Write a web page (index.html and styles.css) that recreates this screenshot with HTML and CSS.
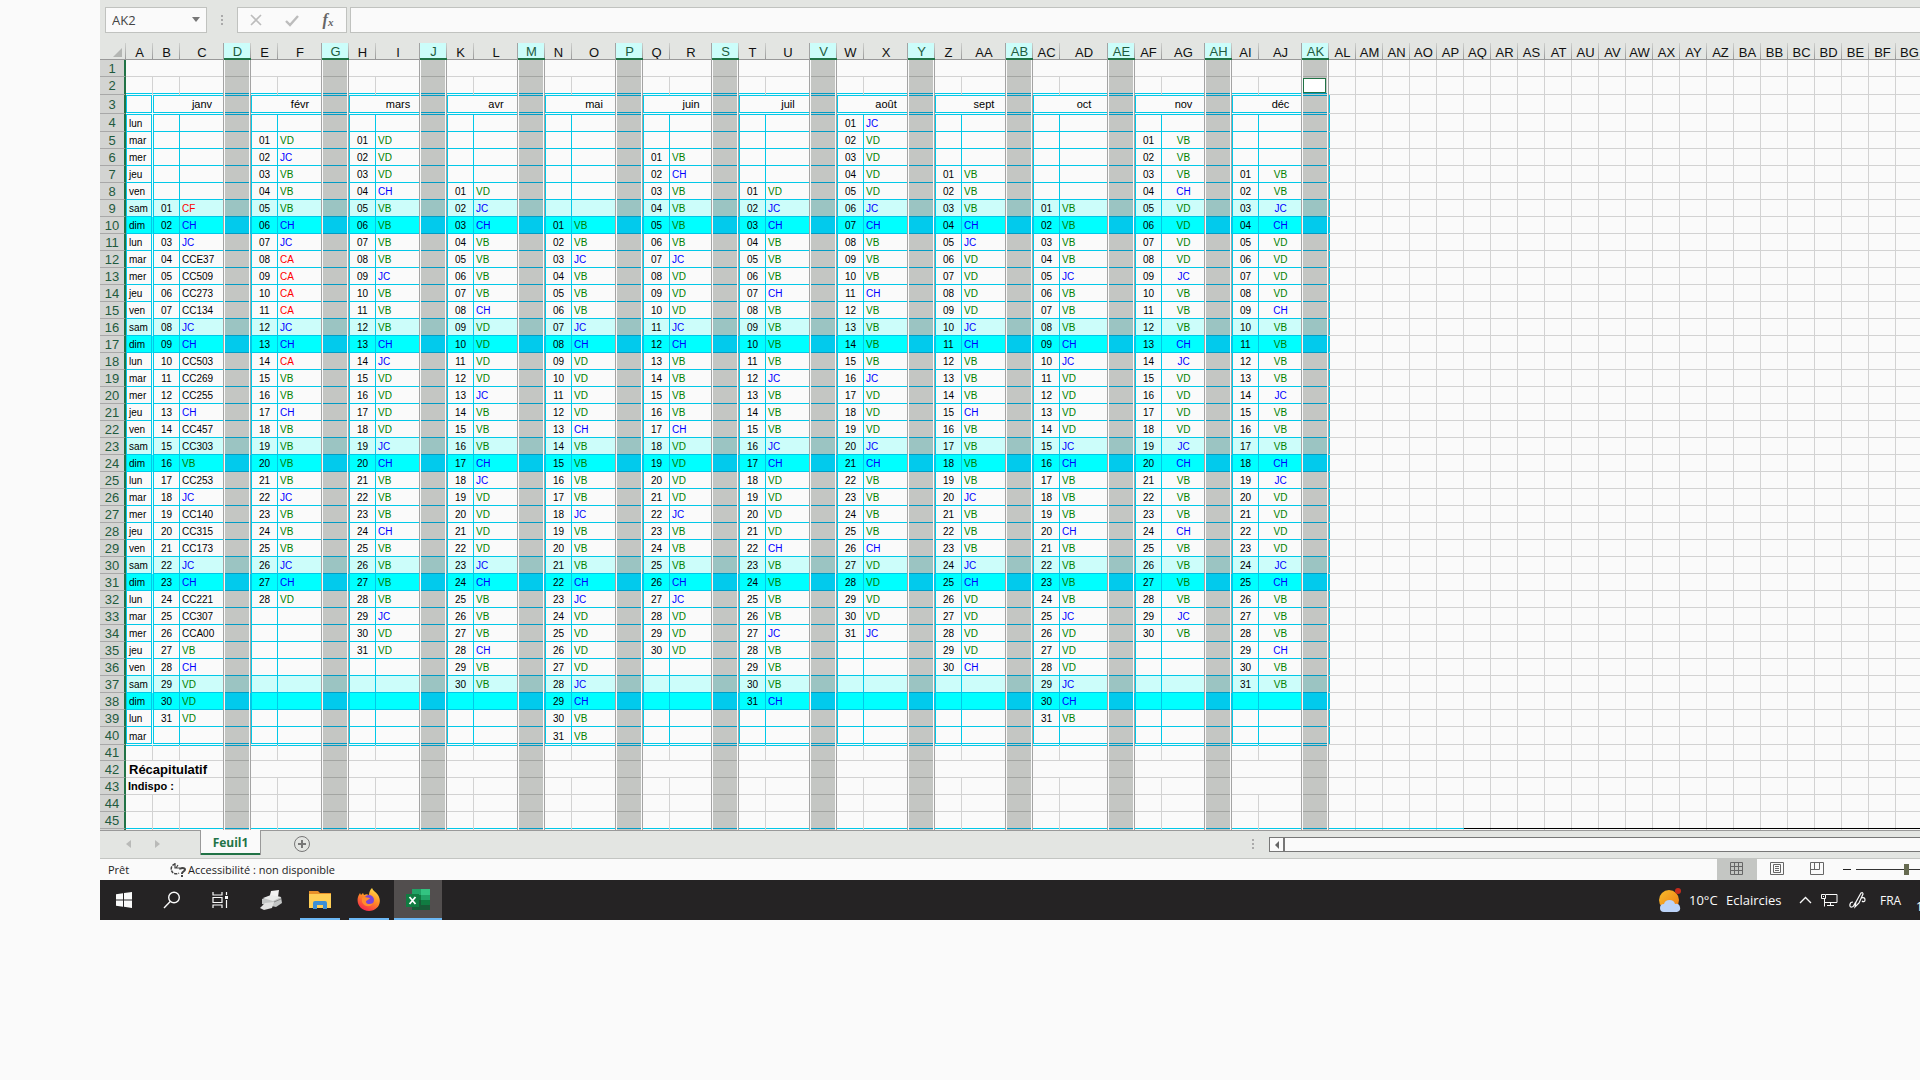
FILE: index.html
```html
<!DOCTYPE html>
<html lang="fr">
<head>
<meta charset="utf-8">
<title>Planning annuel</title>
<link rel="stylesheet" href="styles.css">
</head>
<body>
<div class="window">
  <header class="formula-bar">
    <div class="name-box">
      <input class="name-input" aria-label="Zone Nom" value="AK2">
      <button class="name-toggle" aria-label="Ouvrir la liste"><svg width="8" height="5" viewBox="0 0 8 5"><path d="M0 0h8L4 5z" fill="#777"/></svg></button>
    </div>
    <span class="grip"></span>
    <div class="formula-buttons">
      <button aria-label="Annuler"><svg width="14" height="14" viewBox="0 0 14 14"><path d="M2 2l10 10M12 2L2 12" stroke="#bcbcbc" stroke-width="1.600" fill="none"/></svg></button>
      <button aria-label="Entrer"><svg width="14" height="14" viewBox="0 0 14 14"><path d="M1 8l4 4 8-9" stroke="#bcbcbc" stroke-width="2.400" fill="none"/></svg></button>
      <button class="fx" aria-label="Insérer une fonction">f<small>x</small></button>
    </div>
    <input class="formula-input" aria-label="Barre de formule">
  </header>

  <main class="sheet">
    <table class="grid" id="grid"></table>
  </main>

  <nav class="tab-bar">
    <button class="nav-arrow" aria-label="Feuille précédente"><svg width="5" height="8" viewBox="0 0 5 8"><path d="M5 0v8L0 4z" fill="#b9bab8"/></svg></button>
    <button class="nav-arrow" aria-label="Feuille suivante"><svg width="5" height="8" viewBox="0 0 5 8"><path d="M0 0v8l5-4z" fill="#b9bab8"/></svg></button>
    <button class="sheet-tab">Feuil1</button>
    <button class="add-sheet" aria-label="Nouvelle feuille"><svg width="18" height="18" viewBox="0 0 18 18"><circle cx="9" cy="9" r="7.5" fill="none" stroke="#777"/><path d="M9 5v8M5 9h8" stroke="#777" stroke-width="2"/></svg></button>
    <span class="grip tab-grip"></span>
    <div class="scrollbar">
      <button class="scroll-left" aria-label="Défiler à gauche"><svg width="4" height="8" viewBox="0 0 4 8"><path d="M4 0v8L0 4z" fill="#666"/></svg></button>
    </div>
  </nav>

  <footer class="status-bar">
    <span class="ready">Prêt</span>
    <svg class="access-icon" width="18" height="16" viewBox="0 0 18 16" fill="none" stroke="#444"><path d="M6 2a5 5 0 1 0 4 9" stroke-width="1.5" stroke-dasharray="3 1"/><path d="M6 1v5h5M9 3l-2 3" stroke-width="1.2"/><path d="M11 7.500c0-2 5-2 5 0s-3 2-3 4v.5M13 13v2" stroke-width="2"/></svg>
    <span class="access">Accessibilité : non disponible</span>
    <div class="views">
      <button class="view active" aria-label="Normal"><svg width="14" height="14" viewBox="0 0 14 14"><path d="M.5 .5h12v12H.5zM4.500 .5v12M8.500 .5v12M.5 4.500h12M.5 8.500h12" fill="none" stroke="#666"/></svg></button>
      <button class="view" aria-label="Mise en page"><svg width="14" height="14" viewBox="0 0 14 14"><path d="M.5 .5h13v12H.5zM3.500 2.500h7v8h-7zM5 4.500h4M5 6.500h4M5 8.500h4" fill="none" stroke="#666"/></svg></button>
      <button class="view" aria-label="Sauts de page"><svg width="14" height="14" viewBox="0 0 14 14"><path d="M.5 .5h13v12H.5zM.5 7.500h9v-7M4.500 .5v7" fill="none" stroke="#666"/></svg></button>
      <span class="minus"></span>
      <span class="zoom-track"><span class="zoom-thumb"></span></span>
    </div>
  </footer>

  <div class="taskbar">
    <button class="task" aria-label="Démarrer"><svg width="16" height="16" viewBox="0 0 16 16" fill="#fafafa"><path d="M0 2.200l7-1V7.500H0zM8 1l8-1v7.500H8zM0 8.500h7v6.300l-7-1zM8 8.500h8V16l-8-1.200z"/></svg></button>
    <button class="task" aria-label="Rechercher"><svg width="18" height="18" viewBox="0 0 18 18" fill="none" stroke="#fafafa" stroke-width="1.400"><circle cx="11" cy="6.500" r="5.300"/><path d="M7.200 10.500L1 17"/></svg></button>
    <button class="task" aria-label="Vue des tâches"><svg width="17" height="16" viewBox="0 0 17 16" fill="none" stroke="#fafafa" stroke-width="1.200"><path d="M1 0v3h9V0M1 5.500h9v5H1zM1 16v-3h9v3M14.500 0v3M14.500 8v8"/><path d="M13 4h3v3h-3z" fill="#fafafa" stroke="none"/></svg></button>
    <button class="task" aria-label="Imprimante"><svg width="24" height="20" viewBox="0 0 24 20"><path d="M11 1l8-1-1 7-9 2z" fill="#f2f2f2"/><path d="M2 9l8-3 11 1 1 6-6 4-14-3z" fill="#c3c5c5"/><path d="M3 8l8-3 10 2-8 4z" fill="#e9eaea"/><path d="M5 13l9-1-2 6-8 2-4-2z" fill="#e2e2e2"/><path d="M14 12l7-3" stroke="#8a8a8a"/></svg></button>
    <button class="task open" aria-label="Explorateur de fichiers"><svg width="22" height="18" viewBox="0 0 22 18"><path d="M0 0h9l2 2h11v6H0z" fill="#e8912a"/><path d="M0 3h22v14H0z" fill="#ffcf56"/><path d="M4 18v-6q0-2 2-2h10q2 0 2 2v6h-4v-4H8v4z" fill="#3c8fd6"/></svg></button>
    <button class="task open" aria-label="Firefox"><svg width="24" height="24" viewBox="0 0 24 24"><defs><linearGradient id="ff" x1=".8" y1="0" x2=".3" y2="1"><stop offset="0" stop-color="#ffe14a"/><stop offset=".5" stop-color="#ff8a25"/><stop offset="1" stop-color="#f5264f"/></linearGradient></defs><path d="M15 0c1 3 4 4 6 7 5 8-1 16-9 16S-1 16 1 9c.500-2 1.500-3 2-4l1 2 2-2 1 2c2-1 3-1 5 0 0-3 1-5 3-7z" fill="url(#ff)"/><circle cx="12" cy="12" r="5" fill="#7a45d8"/><path d="M5 10c3-2 5 0 8 0-1 2-4 2-4 4s4 3 7 1c-2 5-9 4-11-1z" fill="#ff8c2e"/></svg></button>
    <button class="task open current" aria-label="Excel"><svg width="24" height="22" viewBox="0 0 24 22"><path d="M6 0h9v6H6z" fill="#21a366"/><path d="M15 0h9v6h-9z" fill="#33c481"/><path d="M6 6h9v5H6z" fill="#107c41"/><path d="M15 6h9v5h-9z" fill="#21a366"/><path d="M6 11h9v10H6z" fill="#185c37"/><path d="M15 11h9v5h-9z" fill="#107c41"/><path d="M15 16h9v5h-9z" fill="#185c37"/><path d="M0 5h13v13H0z" fill="#107c41"/><path d="M3.500 8l6 7M9.500 8l-6 7" stroke="#fff" stroke-width="1.800"/></svg></button>
    <div class="tray">
      <svg class="weather" width="24" height="25" viewBox="0 0 24 25"><defs><linearGradient id="sun" x1="0" y1="0" x2="1" y2="1"><stop offset="0" stop-color="#f7bd2c"/><stop offset="1" stop-color="#f07a12"/></linearGradient></defs><circle cx="11" cy="12" r="10" fill="url(#sun)"/><circle cx="20" cy="3" r="3" fill="#c42b1c"/><path d="M6 24a4 4 0 0 1 0-8q1-4 5.500-4t5.500 4a4 4 0 0 1 2 8z" fill="#bcd3f8"/></svg>
      <span class="temp">10°C</span>
      <span class="sky">Eclaircies</span>
      <svg class="chev" width="13" height="8" viewBox="0 0 13 8"><path d="M1 7l5.500-5.500L12 7" fill="none" stroke="#fafafa" stroke-width="1.300"/></svg>
      <svg class="screen" width="17" height="14" viewBox="0 0 17 14" fill="none" stroke="#fafafa"><path d="M5 1.500h11v8H3.500M3.500 6v7.500M.5 1.500h4v4h-4zM2 3.500h1M6 12.500h7M9.500 10v2"/></svg>
      <svg class="pen" width="17" height="17" viewBox="0 0 17 17" fill="none" stroke="#fafafa" stroke-width="1.200"><path d="M6 15l1-5 5-9q2-1 2 1l-4 9zM4 10c-4 0-4 6-1 5 2 0 2-3 4-5M12 6c3-1 4 0 4 2s-2 2-3 1"/></svg>
      <span class="lang">FRA</span>
      <span class="clock">1</span>
    </div>
  </div>
</div>
<script src="sheet.js"></script>
</body>
</html>
```
FILE: styles.css
```css
* { box-sizing: border-box; }

:root {
  --paper: #fafafa;
  --chrome: #e3e5e2;
  --line: #d2d2d2;
  --cyan: #02c8e8;
  --green: #217346;
  --ui: "Open Sans", "Noto Sans", sans-serif;
  --cell: "Liberation Sans", Arial, sans-serif;
}

body { margin: 0; background: var(--paper); font-family: var(--ui); overflow: hidden; }
button, input { font: inherit; color: inherit; margin: 0; padding: 0; border: 0; background: none; border-radius: 0; }
button { display: flex; align-items: center; justify-content: center; }
svg { display: block; flex: none; }

.window { margin-left: 100px; overflow: hidden; }

/* Formula bar */
.formula-bar { display: flex; align-items: stretch; background: var(--chrome); padding: 7px 0 10px 5px; height: 43px; }
.name-box, .formula-buttons, .formula-input { background: var(--paper); border: 1px solid #c0c2bf; }
.name-box { display: flex; width: 102px; }
.name-input { flex: 1; min-width: 0; padding-left: 6px; font-size: 13px; color: #444; }
.name-toggle { width: 20px; padding-bottom: 2px; }
.grip { width: 2px; height: 10px; margin: 8px 14px; background: repeating-linear-gradient(#aaa 0 2px, transparent 2px 4px); }
.formula-buttons { display: flex; width: 110px; justify-content: space-around; padding: 0; }
.formula-buttons button { width: 36px; }
.fx { font: italic bold 16px "Liberation Serif", serif; color: #666; }
.fx small { font-size: 11px; padding-top: 4px; }
.formula-input { flex: 1; min-width: 0; margin-left: 3px; border-right: 0; }

/* Grid: every rule is an inset shadow so that double borders stay on whole pixels */
.sheet { overflow: hidden; border-bottom: 1px solid #999; }
.grid { table-layout: fixed; width: 0; border-collapse: separate; border-spacing: 0; font: 10px/15px var(--cell); }
.grid th, .grid td { padding: 0; font-weight: normal; white-space: nowrap; vertical-align: middle; }
.w-head { width: 26px; }
.w-narrow { width: 27px; }
.w-42 { width: 42px; }
.w-43 { width: 43px; }
.w-44 { width: 44px; }
.w-48 { width: 48px; }

.h-1 { height: 1px; }
.h-16 { height: 16px; }
.h-17 { height: 17px; }
.h-18 { height: 18px; }
.h-19 { height: 19px; }

.grid thead th {
  font-size: 13px; line-height: 13px; color: #111; padding-top: 2px; border-bottom: 1px solid #999; overflow: hidden;
  background: linear-gradient(#cfd1ce, #9a9a9a) right / 1px 100% no-repeat var(--chrome);
}
.grid thead .picked { background-color: #ccfdfa; color: #1e5c40; border-bottom: 2px solid var(--green); box-shadow: -1px 0 #a3a3a3; }
.grid thead .corner { padding-right: 4px; }
.corner svg { margin-left: auto; }

.grid tbody th { font-size: 13px; color: #1f5a3e; background: #d3d4d2; border-right: 2px solid var(--green); border-bottom: 1px solid #a8a8a8; }

td {
  --h: var(--line); --v: var(--line);
  background-color: var(--fill, var(--paper));
  box-shadow:
    inset -1px 0 var(--v), inset 0 -1px var(--h),
    inset 0 1px var(--t, transparent), inset 1px 0 var(--l, transparent),
    inset 0 -2px var(--h2, transparent), inset -2px 0 var(--v2, transparent);
}
td.edge { --v: #a3a3a3; }
td.gap {
  --v: #a3a3a3; --h: #a3a5a2;
  background-color: var(--gap-fill, #c4c6c3);
  box-shadow:
    inset -1px 0 var(--v), inset -2px 0 var(--paper), inset 1px 0 var(--paper),
    inset 0 -1px var(--h), inset 0 1px var(--gt, transparent), inset 0 -2px var(--gh2, transparent);
}
.merged td:not(.out):not(.gap):not(.edge), .spill { --v: transparent; }

.cal td:not(.out) { --h: var(--cyan); }
.cal td.gap { --h: #029cc4; }
.cal .day { --l: var(--cyan); --v: var(--fill, var(--paper)); --v2: var(--cyan); padding-left: 3px; }
.cal .num { --l: var(--cyan); --v: var(--cyan); text-align: center; }
.cal .code { padding-left: 2px; }
.cal .mid { text-align: center; padding-left: 0; }
.cal .after { --l: var(--cyan); }
.cal .month { --l: var(--cyan); --v: #a3a3a3; font-size: 11px; text-align: center; padding-left: 27px; }

.dbl td:not(.out) { --h: var(--paper); --h2: var(--cyan); }
.dbl td.gap { --h: #c4c6c3; --gh2: #029cc4; }
.under td:not(.out) { --t: var(--cyan); }
.under td.gap { --gt: #029cc4; }

.sat td:not(.out) { --fill: #ccfdfa; --gap-fill: #9bc4c2; }
.sun td:not(.out) { --fill: #00ffff; --gap-fill: #02caec; }
.sun td.gap { --v: var(--cyan); }

.last td:not(.out) { --h: var(--cyan); }
.last td.gap { --h: #029cc4; }
.last td.out { --h: #000; box-shadow: inset 0 -1px var(--h), inset -1px 0 var(--v); }
.last td.out.cyan { --h: var(--cyan); }
.sliver td { --h: transparent; }
.grid .sliver td.gap { --h: transparent; }
.grid .sliver th { border-bottom: 0; }

.green { color: #008000; }
.blue { color: #0000ff; }
.red { color: #ff0000; }
.grid td.title { font-size: 13px; font-weight: bold; padding-left: 3px; }
.grid td.label { font-size: 11px; font-weight: bold; padding-left: 2px; }
.grid td.active-cell { padding: 1px 3px 2px 1px; }
.active-cell div { height: 15px; background: #fff; border: 1px solid var(--green); }

/* Sheet tabs */
.tab-bar { display: flex; align-items: flex-start; height: 28px; background: var(--chrome); border-bottom: 1px solid #c3c5c2; padding-left: 14px; }
.nav-arrow { width: 29px; height: 26px; }
.sheet-tab { position: relative; width: 61px; height: 25px; margin: -1px 0 0 28px; background: var(--paper); border: solid #999; border-width: 0 1px; box-shadow: inset 0 -2px var(--green); color: var(--green); font-size: 12px; font-weight: bold; }
.add-sheet { width: 18px; height: 26px; margin-left: 32px; }
.tab-grip { margin: 8px 15px 0 auto; }
.scrollbar { flex: 0 0 651px; height: 15px; margin-top: 6px; background: var(--paper); border: solid #777; border-width: 1px 0 1px 1px; }
.scroll-left { width: 15px; height: 13px; border-right: 2px solid #777; }

/* Status bar */
.status-bar { display: flex; align-items: center; height: 21px; padding-left: 8px; font-size: 11px; color: #222; }
.ready { width: 61px; }
.access-icon { margin-right: 1px; }
.views { display: flex; align-items: center; align-self: stretch; margin-left: auto; }
.view { width: 40px; height: 21px; padding-bottom: 2px; }
.view.active { background: #c4c6c3; }
.minus { width: 8px; height: 1px; margin-left: 6px; background: #222; }
.zoom-track { display: flex; align-items: center; width: 64px; height: 11px; margin-left: 5px; padding-left: 48px; background: linear-gradient(#333, #333) center / 100% 1px no-repeat; }
.zoom-thumb { width: 5px; height: 11px; background: #666a50; }

/* Taskbar */
.taskbar { display: flex; height: 40px; background: #252324; color: #fafafa; }
.task { width: 48px; height: 40px; }
.task:nth-child(4) { margin-left: 4px; }
.task:nth-child(n+6) { margin-left: 1px; }
.open { background: linear-gradient(#6cb8f5, #6cb8f5) bottom / 40px 2px no-repeat; }
.current { background: linear-gradient(#6cb8f5, #6cb8f5) bottom / 100% 2px no-repeat #524e4e; }
.tray { display: flex; align-items: center; margin-left: auto; font-size: 13px; white-space: nowrap; }
.weather { margin-right: 7px; }
.temp { width: 37px; }
.sky { width: 73px; }
.chev { margin-right: 9px; }
.screen { margin-right: 11px; }
.pen { margin-right: 14px; }
.lang { width: 36px; font-size: 12px; }
.clock { width: 4px; height: 16px; align-self: flex-end; margin-bottom: 5px; overflow: hidden; font-size: 12px; line-height: 16px; }
```
FILE: sheet.js
```js
// First row of each month, width class of its code column, and one code per day.
const MONTHS = [
  ["janv", 9, "w-44", "CF CH JC CCE37 CC509 CC273 CC134 JC CH CC503 CC269 CC255 CH CC457 CC303 VB CC253 JC CC140 CC315 CC173 JC CH CC221 CC307 CCA00 VB CH VD VD VD"],
  ["févr", 5, "w-44", "VD JC VB VB VB CH JC CA CA CA CA JC CH CA VB VB CH VB VB VB VB JC VB VB VB JC CH VD"],
  ["mars", 5, "w-44", "VD VD VD CH VB VB VB VB JC VB VB VB CH JC VD VD VD VD JC CH VB VB VB CH VB VB VB VB JC VD VD"],
  ["avr", 8, "w-44", "VD JC CH VB VB VB VB CH VD VD VD VD JC VB VB VB CH JC VD VD VD VD JC CH VB VB VB CH VB VB"],
  ["mai", 10, "w-44", "VB VB JC VB VB VB JC CH VD VD VD VD CH VB VB VB VB JC VB VB VB CH JC VD VD VD VD JC CH VB VB"],
  ["juin", 6, "w-42", "VB CH VB VB VB VB JC VD VD VD JC CH VB VB VB VB CH VD VD VD VD JC VB VB VB CH JC VD VD VD"],
  ["juil", 8, "w-44", "VD JC CH VB VB VB CH VB VB VB VB JC VB VB VB JC CH VD VD VD VD CH VB VB VB VB JC VB VB VB CH"],
  ["août", 4, "w-44", "JC VD VD VD VD JC CH VB VB VB CH VB VB VB VB JC VD VD VD JC CH VB VB VB VB CH VD VD VD VD JC"],
  ["sept", 7, "w-44", "VB VB VB CH JC VD VD VD VD JC CH VB VB VB CH VB VB VB VB JC VB VB VB JC CH VD VD VD VD CH"],
  ["oct", 9, "w-48", "VB VB VB VB JC VB VB VB CH JC VD VD VD VD JC CH VB VB VB CH VB VB VB VB JC VD VD VD JC CH VB"],
  ["nov", 5, "w-43", "VB VB VB CH VD VD VD VD JC VB VB VB CH JC VD VD VD VD JC CH VB VB VB CH VB VB VB VB JC VB"],
  ["déc", 7, "w-43", "VB VB JC CH VD VD VD VD CH VB VB VB VB JC VB VB VB CH JC VD VD VD VD JC CH VB VB VB CH VB VB"]
].map(([name, start, width, codes]) => ({ name, start, width, codes: codes.split(" ") }));

const DAYS = ["lun", "mar", "mer", "jeu", "ven", "sam", "dim"];
const OUTER = 22;
const HEIGHTS = { 2: 18, 3: 19, 4: 18, 40: 18, 41: 16, 46: 1 };

const letters = i => (i >= 26 ? String.fromCharCode(64 + Math.floor(i / 26)) : "") + String.fromCharCode(65 + i % 26);
const colour = c => /^V/.test(c) ? "green" : /^(JC|CH)$/.test(c) ? "blue" : /^(CF|CA)$/.test(c) ? "red" : "";
const td = (cls, text = "", attrs = "") => `<td class="${cls}"${attrs}>${text}</td>`;

function rowClass(r) {
  const c = ["h-" + (HEIGHTS[r] || 17)];
  if (r >= 3 && r <= 40) c.push("cal");
  if (r === 2 || r === 3 || r === 40) c.push("dbl");
  if (r === 3 || r === 4 || r === 41) c.push("under");
  if (r >= 4 && r <= 40 && (r - 4) % 7 === 5) c.push("sat");
  if (r >= 4 && r <= 40 && (r - 4) % 7 === 6) c.push("sun");
  if (r === 1 || r === 42) c.push("merged");
  if (r === 45) c.push("last");
  if (r === 46) c.push("sliver");
  return c.join(" ");
}

function row(r) {
  let out = `<tr class="${rowClass(r)}"><th scope="row">${r < 46 ? r : ""}</th>`;
  if (r === 42) out += td("title edge", "Récapitulatif", ' colspan="3"');
  else if (r === 43) out += td("label", "Indispo :", ' colspan="2"') + td("edge");
  else out += td("day", r >= 4 && r <= 40 ? DAYS[(r - 4) % 7] : "");

  MONTHS.forEach((m, i) => {
    const d = r - m.start;
    const code = r >= 4 && r <= 40 && m.codes[d] || "";
    if (r === 3) out += td("month", m.name, ' colspan="2"');
    else if (i > 0 || (r !== 42 && r !== 43)) {
      out += td(r === 43 && i === 11 ? "spill" : "num", code && String(d + 1).padStart(2, "0"));
      out += td(`code edge ${i > 9 ? "mid" : ""} ${colour(code)}`, code);
    }
    out += r === 2 && i === 11 ? td("gap active-cell", "<div></div>") : td("gap");
  });
  for (let i = 0; i < OUTER; i++) out += td("out" + (i ? "" : " after") + (i < 5 ? " cyan" : ""));
  return out + "</tr>";
}

let cols = '<col class="w-head"><col class="w-narrow">';
MONTHS.forEach(m => { cols += `<col class="w-narrow"><col class="${m.width}"><col class="w-narrow">`; });
cols += '<col class="w-narrow">'.repeat(OUTER);

let head = '<th class="corner"><svg width="9" height="9" viewBox="0 0 9 9"><path d="M9 0v9H0z" fill="#b4b6b3"/></svg></th>';
for (let i = 0; i < 37 + OUTER; i++) {
  head += `<th scope="col"${i > 0 && i < 37 && i % 3 === 0 ? ' class="picked"' : ""}>${letters(i)}</th>`;
}

let body = "";
for (let r = 1; r <= 46; r++) body += row(r);

document.getElementById("grid").innerHTML =
  `<colgroup>${cols}</colgroup><thead><tr class="h-17">${head}</tr></thead><tbody>${body}</tbody>`;
```
